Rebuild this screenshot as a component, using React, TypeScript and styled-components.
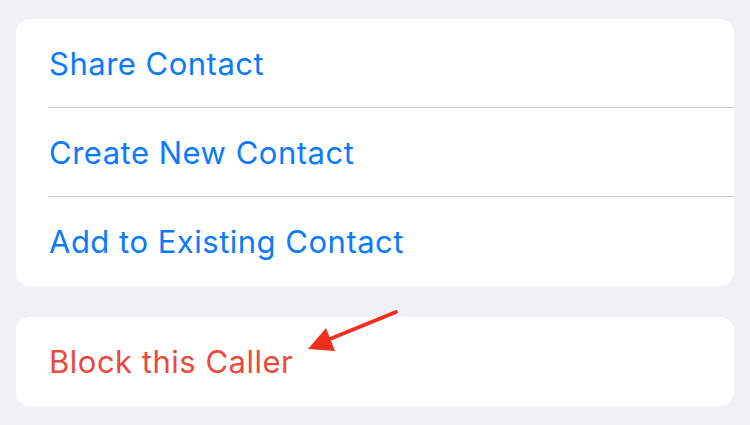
import React from "react";
import styled, { createGlobalStyle } from "styled-components";

const Global = createGlobalStyle`
  html, body { margin: 0; padding: 0; background: #f0f0f5; }
  body { width: 750px; height: 425px; overflow: hidden; }
`;

const Page = styled.div`
  position: relative;
  display: flex;
  flex-direction: column;
  gap: 31px;
  padding: 19px 16px 0 16px;
  width: 750px;
  height: 425px;
  box-sizing: border-box;
  font-family: Inter, "Liberation Sans", sans-serif;
`;

const Card = styled.div`
  background: #ffffff;
  border-radius: 14px;
  display: flex;
  flex-direction: column;
  overflow: hidden;
`;

const Row = styled.div<{ $color: string; $divider?: boolean }>`
  box-sizing: border-box;
  height: 89px;
  display: flex;
  align-items: center;
  margin-left: 32px;
  padding-left: 1px;
  font-size: 31px;
  letter-spacing: 0.5px;
  color: ${(p) => p.$color};
  border-bottom: ${(p) => (p.$divider ? "1px solid #c8c8cc" : "none")};
`;

const Arrow = styled.svg`
  position: absolute;
  left: 300px;
  top: 305px;
  width: 110px;
  height: 55px;
`;

const BLUE = "#0a7aff";
const RED = "#ea4a3b";

export default function App() {
  return (
    <>
      <Global />
      <Page>
        <Card>
          <Row $color={BLUE} $divider>Share Contact</Row>
          <Row $color={BLUE} $divider>Create New Contact</Row>
          <Row $color={BLUE}>Add to Existing Contact</Row>
        </Card>
        <Card>
          <Row $color={RED}>Block this Caller</Row>
        </Card>
        <Arrow viewBox="300 305 110 55">
          <line x1="396" y1="312" x2="325" y2="341" stroke="#f0301e" strokeWidth="4" strokeLinecap="round" />
          <polygon points="308,349 326,328 335,351" fill="#f0301e" />
        </Arrow>
      </Page>
    </>
  );
}
